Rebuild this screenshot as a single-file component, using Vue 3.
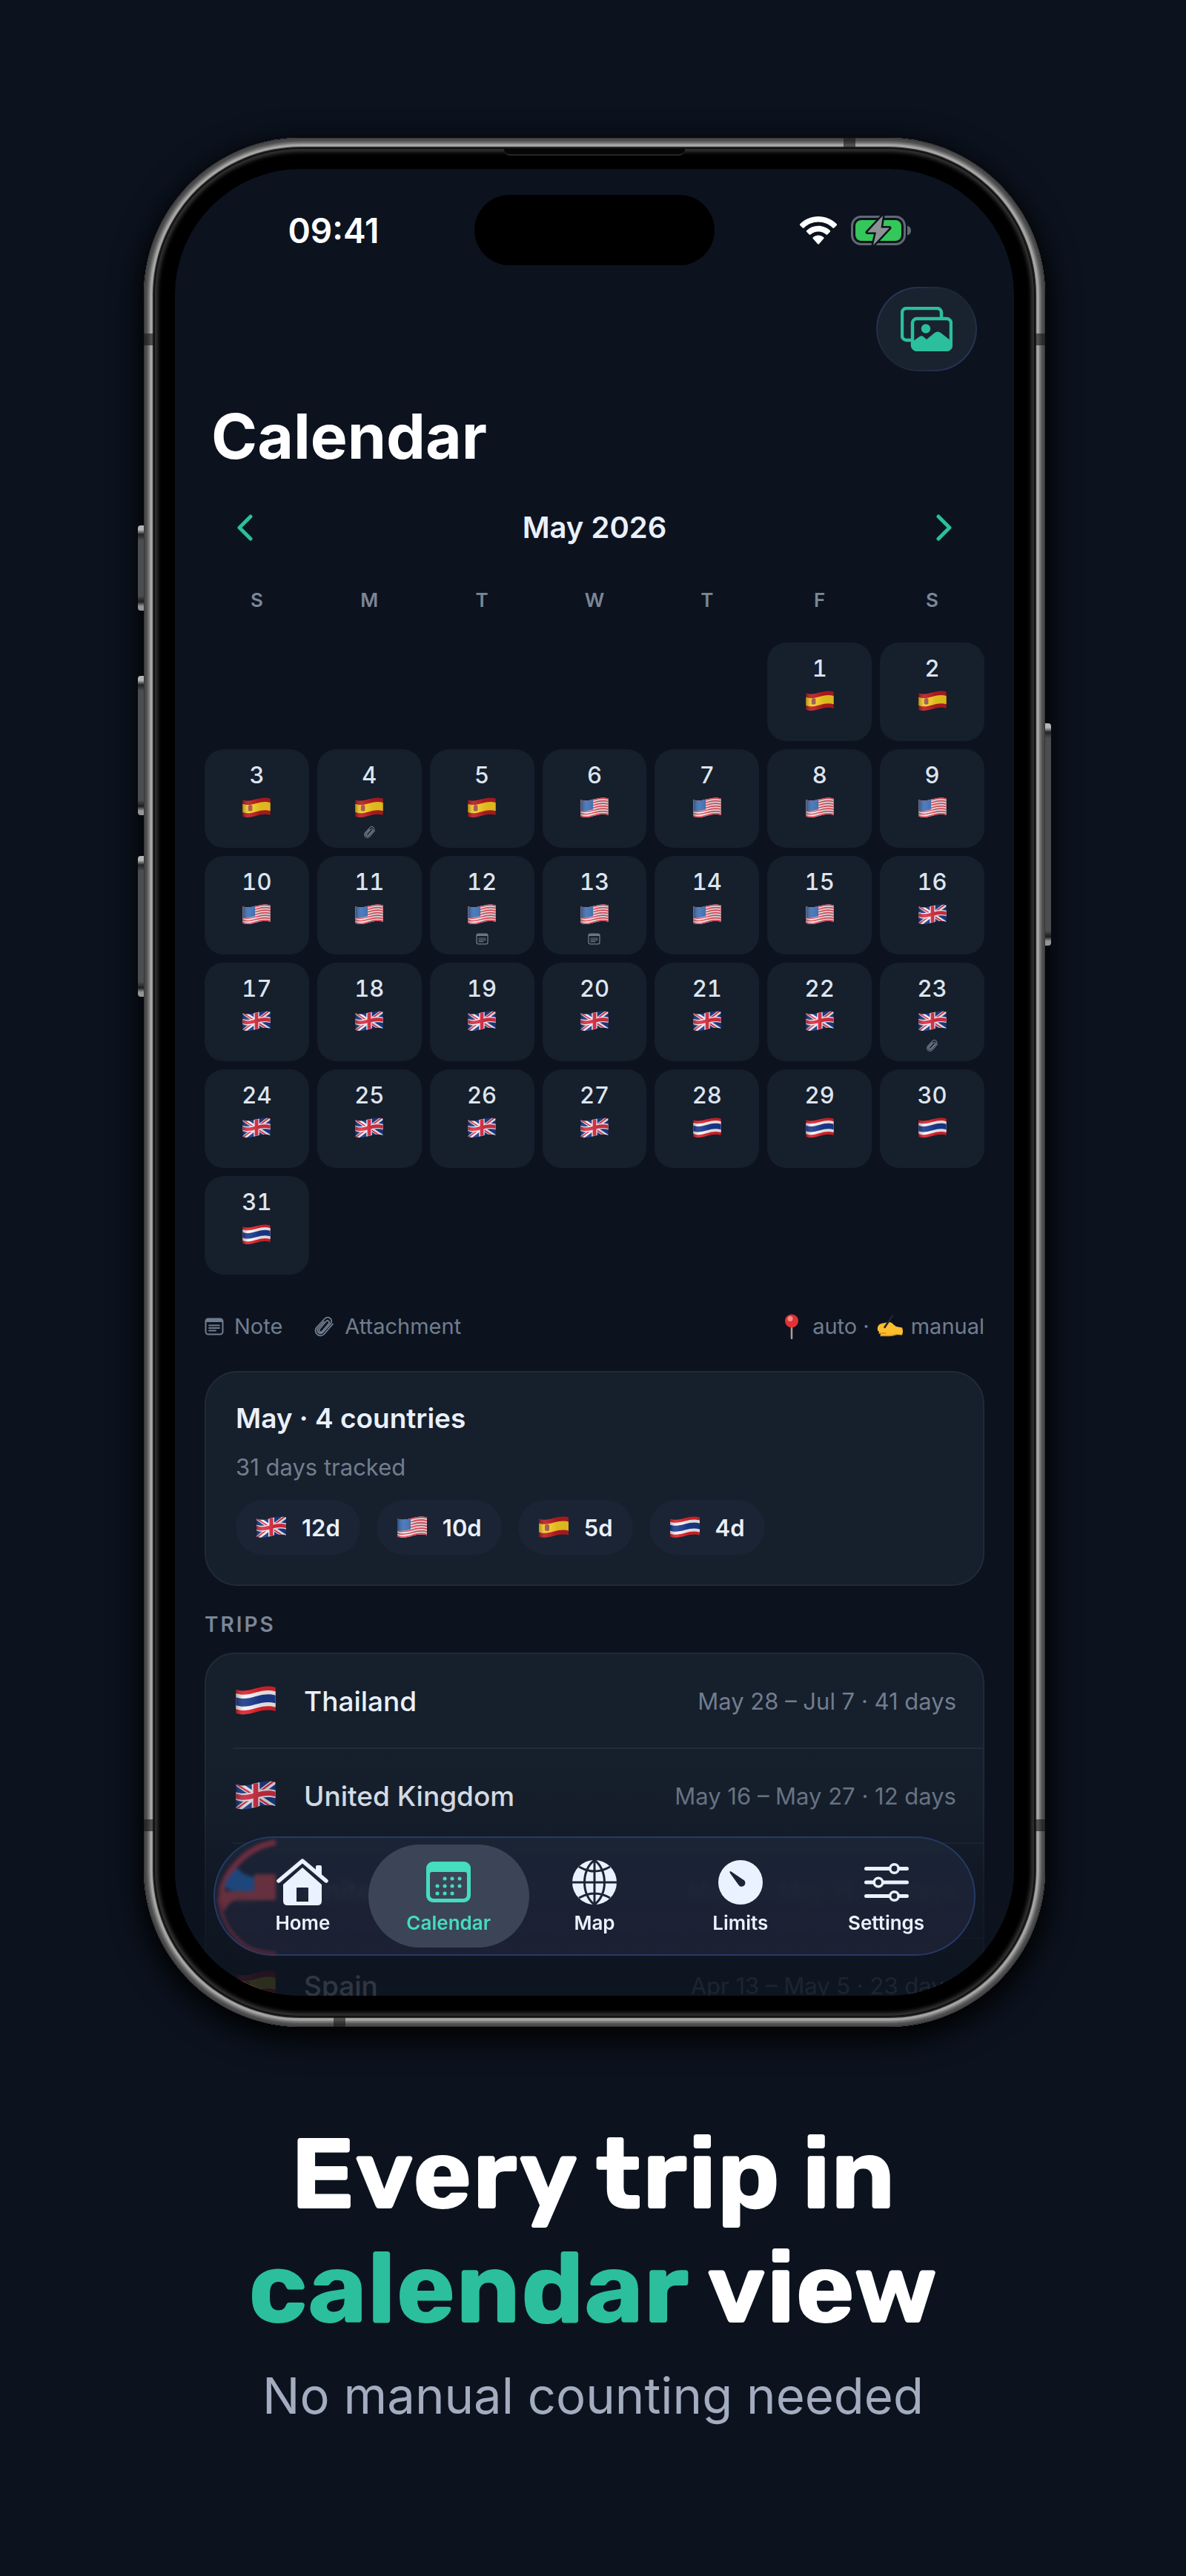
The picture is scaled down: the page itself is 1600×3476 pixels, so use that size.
<template>
  <main class="page">
    <svg class="defs" aria-hidden="true">
      <defs>
        <linearGradient id="sheen" x1="0" x2="1" y1="0" y2="0">
          <stop offset="0" stop-color="#000" stop-opacity="0.3" />
          <stop offset="0.25" stop-color="#fff" stop-opacity="0.08" />
          <stop offset="0.6" stop-color="#000" stop-opacity="0.1" />
          <stop offset="1" stop-color="#000" stop-opacity="0.12" />
        </linearGradient>
        <clipPath id="flagshape"><path :d="band(0, 24)" /></clipPath>
      </defs>
      <symbol id="flag-es" viewBox="0 0 40 30">
        <path :d="band(0, 24)" fill="#b81c22" />
        <path :d="band(6, 18)" fill="#f7ce23" />
        <path d="M8 12q3-2.500 6 0v7q-3 2-6 0z" fill="#b0503a" />
        <circle cx="11" cy="16" r="2" fill="#7d5a78" />
        <path :d="band(0, 24)" fill="url(#sheen)" />
      </symbol>
      <symbol id="flag-us" viewBox="0 0 40 30">
        <path :d="band(0, 24)" fill="#f6f1f3" />
        <path v-for="n in 7" :key="n" :d="band((n - 1) * 3.7, (n - 1) * 3.7 + 1.85)" fill="#e8505f" />
        <g clip-path="url(#flagshape)">
          <path d="M0 0h18v17.500q-8 3-18 2z" fill="#3f70b4" />
        </g>
        <path :d="band(0, 24)" fill="url(#sheen)" />
      </symbol>
      <symbol id="flag-gb" viewBox="0 0 40 30">
        <path :d="band(0, 24)" fill="#1d3b8b" />
        <g clip-path="url(#flagshape)">
          <path d="M0 2 40 28M0 30 40 0" stroke="#f3f1f6" stroke-width="5.500" />
          <path d="M0 3 40 29M0 29 40-1" stroke="#de2f45" stroke-width="1.800" />
          <path d="M20 0v30" stroke="#f3f1f6" stroke-width="8" />
        </g>
        <path :d="band(8, 16)" fill="#f3f1f6" />
        <path :d="band(9.500, 14.500)" fill="#de2f45" />
        <path d="M20 2.500v24" stroke="#de2f45" stroke-width="5" />
        <path :d="band(0, 24)" fill="url(#sheen)" />
      </symbol>
      <symbol id="flag-th" viewBox="0 0 40 30">
        <path :d="band(0, 24)" fill="#e0232b" />
        <path :d="band(4, 20)" fill="#f5f5f8" />
        <path :d="band(8, 16)" fill="#1c3a8e" />
        <path :d="band(0, 24)" fill="url(#sheen)" />
      </symbol>
      <symbol id="note" viewBox="0 0 26 24">
        <rect x="1.500" y="1.500" width="23" height="21" rx="3.500" fill="none" stroke="currentColor" stroke-width="2" />
        <path d="M1.500 6V4.500a3 3 0 0 1 3-3h17a3 3 0 0 1 3 3V6z" fill="currentColor" />
        <path d="M6 10.500h14M6 14h14M6 17.500h9" stroke="currentColor" stroke-width="1.800" stroke-linecap="round" />
      </symbol>
      <symbol id="clip" viewBox="0 0 28 30">
        <path
          d="M20.500 11 11.500 21.500a2.300 2.300 0 0 1-3.500-3L17 8a2.300 2.300 0 0 1 3.500 3M26 11.500 14.500 25a6.800 6.800 0 0 1-10.300-9L15 4.500a5.200 5.200 0 0 1 8 6.700L12.500 23a4.300 4.300 0 0 1-6.500-5.600L14 8.500"
          fill="none" stroke="currentColor" stroke-width="1.800" stroke-linecap="round" stroke-linejoin="round"
        />
      </symbol>
    </svg>

    <div class="phone">
      <i class="key key-action"></i>
      <i class="key key-up"></i>
      <i class="key key-down"></i>
      <i class="key key-power"></i>
      <i class="band band-lt"></i>
      <i class="band band-lb"></i>
      <i class="band band-rt"></i>
      <i class="band band-rb"></i>
      <i class="band band-top"></i>
      <i class="band band-bottom"></i>
      <div class="bezel">
        <i class="speaker"></i>
        <div class="screen">
          <div class="status">
            <time class="clock">09:41</time>
            <div class="island"></div>
            <div class="signals">
              <svg width="50" height="38" viewBox="0 0 50 38" role="img" aria-label="Wi-Fi">
                <path
                  d="M25 0C34.500 0 43 3.700 49.500 10a1.400 1.400 0 0 1 0 2.200l-3 3a1.600 1.600 0 0 1-2.300 0C39 10.400 32.300 7.600 25 7.600S11 10.400 5.800 15.200a1.600 1.600 0 0 1-2.300 0l-3-3a1.400 1.400 0 0 1 0-2.200C7 3.700 15.500 0 25 0z"
                  fill="#fff"
                />
                <path
                  d="M25 12.800c6 0 11.500 2.300 15.700 6.100a1.500 1.500 0 0 1 0 2.200l-3.200 3.100a1.600 1.600 0 0 1-2.200 0A15.200 15.200 0 0 0 25 20.400c-4 0-7.500 1.400-10.300 3.800a1.600 1.600 0 0 1-2.200 0l-3.200-3.100a1.500 1.500 0 0 1 0-2.200A23 23 0 0 1 25 12.800z"
                  fill="#fff"
                />
                <path
                  d="M25 25.500c2.700 0 5 .9 6.900 2.400a1.500 1.500 0 0 1 .1 2.300l-5.900 6.800a1.600 1.600 0 0 1-2.200 0L18 30.200a1.500 1.500 0 0 1 .1-2.300c1.900-1.500 4.200-2.400 6.900-2.400z"
                  fill="#fff"
                />
              </svg>
              <svg width="82" height="40" viewBox="0 0 82 40" role="img" aria-label="Battery charging">
                <rect x="1.500" y="1.500" width="71" height="37" rx="12" fill="none" stroke="#626874" stroke-width="3" />
                <path d="M76 13.500q5 1.500 5 6.500t-5 6.500z" fill="#626874" />
                <rect x="6" y="6" width="62" height="28" rx="8" fill="#34c759" />
                <path d="M43 0 22 22.500h12L30 40 52 16.500H40.500z" fill="#8c9194" stroke="#0c131f" stroke-width="5" stroke-linejoin="round" />
                <path d="M43 0 22 22.500h12L30 40 52 16.500H40.500z" fill="#8c9194" />
              </svg>
            </div>
          </div>

          <div class="toolbar">
            <button class="photos" type="button" aria-label="Photos">
              <svg width="70" height="60" viewBox="0 0 70 60">
                <path d="M14 45H8a6 6 0 0 1-6-6V8a6 6 0 0 1 6-6h41a6 6 0 0 1 6 6v7" fill="none" stroke="#2bbf9d" stroke-width="4.500" />
                <rect x="16" y="16" width="52" height="42" rx="6" fill="none" stroke="#2bbf9d" stroke-width="4.500" />
                <circle cx="34" cy="29.500" r="6.200" fill="#2bbf9d" />
                <path d="M16 47 25 40.500q3-2.500 6 0l4 3.500 11-9q4-3 8 0l14 11v7a5 5 0 0 1-5 5H21a5 5 0 0 1-5-5z" fill="#2bbf9d" />
              </svg>
            </button>
          </div>

          <h1 class="title">Calendar</h1>

          <div class="month">
            <button type="button" aria-label="Previous month">
              <svg width="22" height="36" viewBox="0 0 22 36"><path d="M19 3 4 18l15 15" /></svg>
            </button>
            <h2>May 2026</h2>
            <button type="button" aria-label="Next month">
              <svg width="22" height="36" viewBox="0 0 22 36"><path d="m3 3 15 15L3 33" /></svg>
            </button>
          </div>

          <div class="weekdays">
            <span v-for="(d, i) in weekdays" :key="i">{{ d }}</span>
          </div>

          <div class="grid">
            <div v-for="n in 5" :key="'blank' + n"></div>
            <button v-for="day in days" :key="day.n" class="day" type="button">
              <span>{{ day.n }}</span>
              <svg class="flag-sm"><use :href="'#flag-' + day.flag" /></svg>
              <svg v-if="day.mark" class="mark"><use :href="'#' + day.mark" /></svg>
            </button>
          </div>

          <div class="legend">
            <svg width="26" height="26"><use href="#note" /></svg>
            <span class="legend-note">Note</span>
            <svg width="28" height="30"><use href="#clip" /></svg>
            <span>Attachment</span>
            <div class="source">
              <svg width="20" height="34" viewBox="0 0 20 34">
                <path d="M10 15v18" stroke="#b59a8e" stroke-width="2.500" stroke-linecap="round" />
                <circle cx="10" cy="9.500" r="9" fill="#df3338" />
                <circle cx="8" cy="6.500" r="3.500" fill="#fb8a85" />
              </svg>
              <span class="auto">auto ·</span>
              <svg width="36" height="32" viewBox="0 0 36 32">
                <path d="M1 17q1-4 5-5l10-2q4 0 6 3l4 3 8 1.500q2 5 0 10l-7-.5-7 2H8q-4 0-3-3-3-1-2-3-3-1-2-6z" fill="#fcbe2c" />
                <path d="M5 28.500h12q6-1 10-2M3 25h9" fill="none" stroke="#d08f1c" stroke-width="1.500" stroke-linecap="round" />
                <path d="M10.500 17 21 1.500" stroke="#20242c" stroke-width="2.600" stroke-linecap="round" />
              </svg>
              <span>manual</span>
            </div>
          </div>

          <section class="summary">
            <h3>May · 4 countries</h3>
            <p>31 days tracked</p>
            <div class="chips">
              <span v-for="c in countries" :key="c.flag" class="chip">
                <svg class="flag-md"><use :href="'#flag-' + c.flag" /></svg>
                {{ c.days }}d
              </span>
            </div>
          </section>

          <h4 class="section">TRIPS</h4>
          <ul class="trips">
            <li v-for="t in trips" :key="t.name">
              <svg class="flag-lg"><use :href="'#flag-' + t.flag" /></svg>
              <strong>{{ t.name }}</strong>
              <span>{{ t.range }}</span>
            </li>
          </ul>

          <div class="fade"></div>

          <nav class="tabs">
            <svg class="lens" viewBox="0 0 84 161" aria-hidden="true">
              <path d="M82 8C58 12 44 22 32 34 22 44 14 54 9 74" fill="none" stroke="#6f2d40" stroke-width="8" />
              <path d="M5 82C8 112 22 134 42 148 54 155 66 157 82 158" fill="none" stroke="#6f2d40" stroke-width="3" />
              <path d="M53 51h29v35H30q-12 1-17 16Q6 88 5 74h48z" fill="#66303f" />
              <path d="M31 42q3 9 22 13v19H30Q14 74 13 64 20 50 31 42z" fill="#1d477c" />
            </svg>
            <button v-for="tab in tabs" :key="tab.name" type="button" :class="{ active: tab.name === current }" @click="current = tab.name">
              <svg v-if="tab.name === 'Home'" width="70" height="64" viewBox="0 0 70 64">
                <path d="M9 36 35 13l26 23v22q0 6-6 6H15q-6 0-6-6zM27 41v18h16V41q0-1-1-1H28q-1 0-1 1z" fill="currentColor" fill-rule="evenodd" />
                <path d="M3 31 35 3.500 67 31" fill="none" stroke="#1c2637" stroke-width="11" stroke-linejoin="round" />
                <path d="M53 12q0-2 2-2h4q2 0 2 2v14l-8-7z" fill="currentColor" />
                <path d="M3 31 35 4l32 27" fill="none" stroke="currentColor" stroke-width="5.500" stroke-linecap="round" stroke-linejoin="round" />
              </svg>
              <svg v-else-if="tab.name === 'Calendar'" width="60" height="64" viewBox="0 0 60 64">
                <path d="M9 5h42a9 9 0 0 1 9 9v37a9 9 0 0 1-9 9H9a9 9 0 0 1-9-9V14a9 9 0 0 1 9-9zM5 22v27q0 6 6 6h38q6 0 6-6V22q0-3-3-3H8q-3 0-3 3z" fill="currentColor" fill-rule="evenodd" />
                <path d="M25 28h.1M35 28h.1M45 28h.1M15 38h.1M25 38h.1M35 38h.1M45 38h.1M15 48h.1M25 48h.1M35 48h.1" stroke="currentColor" stroke-width="5" stroke-linecap="round" />
              </svg>
              <svg v-else-if="tab.name === 'Map'" width="60" height="64" viewBox="0 0 60 64">
                <circle cx="30" cy="33" r="30" fill="currentColor" />
                <path
                  d="M0 33h60M30 3v60M30 3C12 16 12 50 30 63M30 3c18 13 18 47 0 60M9 12q21 12 42 0M9 54q21-12 42 0"
                  fill="none" stroke="#1c2435" stroke-width="3"
                />
              </svg>
              <svg v-else-if="tab.name === 'Limits'" width="60" height="64" viewBox="0 0 60 64">
                <circle cx="30" cy="33" r="30" fill="currentColor" />
                <path d="M15.500 18.500q1-1 2 0L33 29a5 5 0 1 1-6 7L15.500 20z" fill="#1c2435" />
              </svg>
              <svg v-else width="60" height="64" viewBox="0 0 60 64">
                <path d="M2.500 14.500h31M47 14.500h10.500M2.500 33h10M26 33h31.500M2.500 51.500h31M47 51.500h10.500" stroke="currentColor" stroke-width="5" stroke-linecap="round" />
                <g fill="none" stroke="currentColor" stroke-width="3.600">
                  <circle cx="40.500" cy="14.500" r="5.800" />
                  <circle cx="19" cy="33" r="5.800" />
                  <circle cx="40.500" cy="51.500" r="5.800" />
                </g>
              </svg>
              <span>{{ tab.name }}</span>
            </button>
          </nav>
        </div>
      </div>
    </div>

    <h2 class="headline">Every trip in<br /><em>calendar</em> view</h2>
    <p class="tagline">No manual counting needed</p>
  </main>
</template>

<script setup>
import { ref } from "vue";

const current = ref("Calendar");
const weekdays = ["S", "M", "T", "W", "T", "F", "S"];

const marks = { 4: "clip", 12: "note", 13: "note", 23: "clip" };

function flagFor(n) {
  if (n <= 5) return "es";
  if (n <= 15) return "us";
  if (n <= 27) return "gb";
  return "th";
}

const days = Array.from({ length: 31 }, (_, i) => ({
  n: i + 1,
  flag: flagFor(i + 1),
  mark: marks[i + 1],
}));

const countries = [
  { flag: "gb", days: 12 },
  { flag: "us", days: 10 },
  { flag: "es", days: 5 },
  { flag: "th", days: 4 },
];

const trips = [
  { flag: "th", name: "Thailand", range: "May 28 – Jul 7 · 41 days" },
  { flag: "gb", name: "United Kingdom", range: "May 16 – May 27 · 12 days" },
  { flag: "us", name: "United States", range: "May 6 – May 15 · 10 days" },
  { flag: "es", name: "Spain", range: "Apr 13 – May 5 · 23 days" },
];

const tabs = [
  { name: "Home" },
  { name: "Calendar" },
  { name: "Map" },
  { name: "Limits" },
  { name: "Settings" },
];

// horizontal strip of a waving flag, a and b are its top and bottom
function band(a, b) {
  return (
    `M0 ${3.5 + a}C7 ${6 + a} 13 ${4.5 + a} 20 ${2.5 + a}S33 ${-0.5 + a} 40 ${1.5 + a}` +
    `V${1.5 + b}C33 ${-0.5 + b} 27 ${0.5 + b} 20 ${2.5 + b}S7 ${6 + b} 0 ${3.5 + b}z`
  );
}
</script>

<style>
body {
  background: #0c131f;
}
</style>

<style scoped>
.page {
  display: flex;
  flex-direction: column;
  align-items: center;
  min-height: 100vh;
  box-sizing: border-box;
  padding: 186px 0 160px;
  background: #0c131f;
  font-family: Inter, "Liberation Sans", sans-serif;
  color: #eaf0fa;
}

.defs {
  position: absolute;
  width: 0;
  height: 0;
}

h1,
h2,
h3,
h4,
p,
ul {
  margin: 0;
  padding: 0;
}

button {
  border: 0;
  padding: 0;
  background: none;
  font: inherit;
  color: inherit;
  cursor: pointer;
}

svg {
  display: block;
  flex: none;
}

/* device */
.phone {
  position: relative;
  width: 76%;
  box-sizing: border-box;
  margin-left: 4px;
  padding: 14px;
  border-radius: 212px;
  background: #1a1a1a;
  box-shadow:
    inset 0 0 1px 1px #333,
    inset 0 0 2px 5px #4c4c4c,
    inset 0 0 2px 8px #727272,
    inset 0 0 1px 12px #a8a8a8,
    0 12px 40px 6px #000;
}

.bezel {
  position: relative;
  padding: 28px;
  border-radius: 198px;
  background: #000;
  box-shadow:
    inset 0 0 0 1px #0c0c0c,
    inset 0 0 5px 5px #343434;
}

.screen {
  position: relative;
  display: flex;
  flex-direction: column;
  aspect-ratio: 1132 / 2465;
  overflow: hidden;
  border-radius: 170px;
  background: #0c131f;
}

.key {
  position: absolute;
  left: -8px;
  width: 8px;
  border-radius: 4px 0 0 4px;
  background: linear-gradient(#b5b5b5 6px, #222326 12px, #4b4d50 20px, #4b4d50 calc(100% - 20px), #1c1d1f calc(100% - 12px), #959595 calc(100% - 6px));
}

.key-action {
  top: 20.5%;
  height: 115px;
}

.key-up {
  top: 28.5%;
  height: 188px;
}

.key-down {
  top: 38%;
  height: 190px;
}

.key-power {
  left: auto;
  right: -8px;
  top: 31%;
  height: 300px;
  border-radius: 0 4px 4px 0;
}

.band {
  position: absolute;
  width: 14px;
  height: 16px;
  background: rgba(20, 20, 20, 0.6);
}

.band-lt,
.band-rt {
  top: 264px;
}

.band-lb,
.band-rb {
  bottom: 264px;
}

.band-lt,
.band-lb {
  left: 0;
}

.band-rt,
.band-rb {
  right: 0;
}

.band-top {
  top: 0;
  right: 256px;
  width: 16px;
  height: 14px;
}

.band-bottom {
  bottom: 0;
  left: 256px;
  width: 16px;
  height: 14px;
}

.speaker {
  position: absolute;
  top: 1px;
  left: 50%;
  width: 244px;
  height: 9px;
  margin-left: -122px;
  box-sizing: border-box;
  border-bottom: 2px solid #262626;
  border-radius: 0 0 8px 8px;
  background: #060606;
}

/* header */
.status {
  display: grid;
  grid-template-columns: 1fr 324px 1fr;
  align-items: center;
  margin-top: 35px;
}

.clock {
  padding-left: 24px;
  text-align: center;
  font-size: 46px;
  line-height: 56px;
  font-weight: 600;
  color: #fff;
}

.island {
  height: 95px;
  border-radius: 48px;
  background: #000;
}

.signals {
  display: flex;
  justify-content: center;
  align-items: center;
  gap: 19px;
  padding-right: 24px;
}

.toolbar {
  display: flex;
  justify-content: flex-end;
  margin: 29px 50px 0;
}

.photos {
  display: grid;
  place-items: center;
  width: 136px;
  height: 114px;
  border-radius: 57px;
  border: 2px solid transparent;
  background:
    linear-gradient(#19222f, #19222f) padding-box,
    linear-gradient(135deg, #2d3c68, #1d2737 40%, #1d2737 60%, #2d3c68) border-box;
}

.title {
  margin: 38px 49px 0;
  font-size: 84px;
  line-height: 100px;
  font-weight: 700;
  color: #fff;
}

.month {
  display: grid;
  grid-template-columns: 108px 1fr 108px;
  align-items: center;
  margin: 37px 40px 0;
}

.month button {
  display: grid;
  place-items: center;
  height: 72px;
}

.month path {
  fill: none;
  stroke: #2bbf9d;
  stroke-width: 5;
  stroke-linecap: round;
  stroke-linejoin: round;
}

.month h2 {
  text-align: center;
  font-size: 40px;
  line-height: 72px;
  font-weight: 600;
}

/* calendar */
.weekdays {
  display: grid;
  grid-template-columns: repeat(7, 1fr);
  gap: 11px;
  margin: 46px 40px 41px;
  text-align: center;
  font-size: 26px;
  line-height: 32px;
  font-weight: 600;
  color: #7b8697;
}

.grid {
  display: grid;
  grid-template-columns: repeat(7, 1fr);
  gap: 11px;
  margin: 0 40px;
}

.day {
  display: flex;
  flex-direction: column;
  align-items: center;
  height: 133px;
  box-sizing: border-box;
  padding-top: 17px;
  border-radius: 26px;
  background: #161f2c;
  font-size: 31px;
  line-height: 36px;
  font-weight: 500;
  font-variant-numeric: tabular-nums;
  color: #dde5ef;
}

.flag-sm {
  width: 38px;
  height: 28px;
  margin-top: 12px;
}

.flag-md {
  width: 42px;
  height: 30px;
}

.flag-lg {
  width: 54px;
  height: 40px;
}

.mark {
  width: 17px;
  height: 18px;
  margin-top: 10px;
  color: #6d7887;
}

.legend {
  display: flex;
  align-items: center;
  gap: 14px;
  margin: 52px 40px 42px;
  font-size: 29px;
  line-height: 36px;
  color: #717d8e;
}

.legend-note {
  margin-right: 28px;
}

.source {
  display: flex;
  align-items: center;
  gap: 10px;
  margin-left: auto;
}

.auto {
  margin-left: 8px;
}

.summary {
  margin: 0 40px;
  padding: 38px 40px 40px;
  border: 2px solid #212b38;
  border-radius: 44px;
  background: #161f2c;
}

.summary h3 {
  font-size: 37px;
  line-height: 48px;
  font-weight: 600;
}

.summary p {
  margin-top: 22px;
  font-size: 31px;
  line-height: 40px;
  color: #717d8e;
}

.chips {
  display: flex;
  gap: 22px;
  margin-top: 24px;
}

.chip {
  display: flex;
  align-items: center;
  gap: 20px;
  height: 74px;
  padding: 0 27px;
  border-radius: 37px;
  background: #1a2434;
  font-size: 31px;
  font-weight: 600;
}

.section {
  margin: 34px 40px 20px;
  font-size: 28px;
  line-height: 36px;
  font-weight: 600;
  letter-spacing: 3px;
  color: #7b8697;
}

.trips {
  flex: none;
  margin: 0 40px;
  list-style: none;
  border: 2px solid #212b38;
  border-radius: 40px;
  background: #161f2c;
}

.trips li {
  display: flex;
  align-items: center;
  height: 126px;
  margin-left: 36px;
  padding: 0 36px 0 4px;
  border-bottom: 2px solid #212b38;
}

.trips strong {
  margin-left: 38px;
  font-size: 37px;
  font-weight: 500;
}

.trips span {
  margin-left: auto;
  font-size: 31px;
  color: #717d8e;
}

.fade {
  position: absolute;
  inset: auto 0 0;
  height: 340px;
  background: linear-gradient(rgba(12, 19, 31, 0), rgba(12, 19, 31, 0.12) 25%, rgba(12, 19, 31, 0.6) 60%, rgba(12, 19, 31, 0.84) 90%);
}

/* tab bar */
.tabs {
  position: absolute;
  inset: auto 52px 54px;
  display: grid;
  grid-template-columns: repeat(5, 1fr);
  height: 161px;
  box-sizing: border-box;
  padding: 9px 20px;
  border: 2px solid #263a66;
  border-radius: 81px;
  background: linear-gradient(rgba(27, 38, 55, 0.88), rgba(29, 33, 52, 0.95));
  backdrop-filter: blur(3px);
}

.lens {
  position: absolute;
  left: 0;
  top: -2px;
  width: 84px;
  height: 161px;
  filter: blur(2px);
}

.tabs button {
  position: relative;
  display: flex;
  flex-direction: column;
  align-items: center;
  gap: 8px;
  margin: 0 -10px;
  padding-top: 18px;
  border-radius: 70px;
  font-size: 26px;
  line-height: 32px;
  font-weight: 600;
  color: #eaf2ff;
}

.tabs .active {
  background: #3b4557;
  color: #45dcc0;
}

/* caption */
.headline {
  margin-top: 122px;
  text-align: center;
  font-family: Rubik, Inter, sans-serif;
  font-size: 136px;
  line-height: 154px;
  font-weight: 700;
  color: #fff;
}

.headline em {
  font-style: normal;
  color: #2bbf9d;
}

.tagline {
  margin-top: 24px;
  font-size: 67px;
  line-height: 88px;
  color: #a3adbf;
}
</style>
